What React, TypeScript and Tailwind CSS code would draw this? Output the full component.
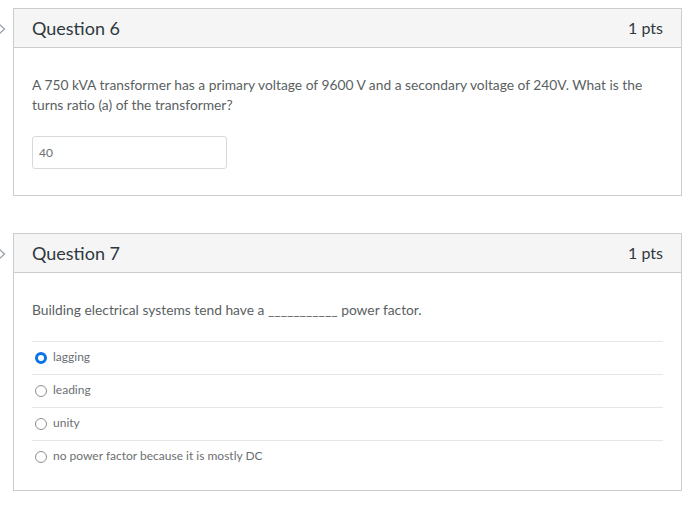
import React from "react";

function Chevron() {
  return (
    <svg className="absolute left-[-13px] top-[14px]" width="7" height="14" viewBox="0 0 7 14">
      <path d="M-2 1 L4.5 7 L-2 13" fill="none" stroke="#9aa5ae" strokeWidth="1.4" />
    </svg>
  );
}

function Header({ title }: { title: string }) {
  return (
    <div className="relative h-[39px] bg-[#f5f5f5] border-b border-[#c7cdd1] flex items-center justify-between px-[18px]">
      <span className="text-[18px] text-[#30383e]">{title}</span>
      <span className="text-[16px] text-[#30383e]">1 pts</span>
    </div>
  );
}

function Radio({ checked }: { checked?: boolean }) {
  return checked ? (
    <span className="w-[12px] h-[12px] rounded-full border-[3.5px] border-[#0b74e5] bg-white shrink-0" />
  ) : (
    <span className="w-[12px] h-[12px] rounded-full border-[1.5px] border-[#8b8f93] bg-white shrink-0" />
  );
}

export default function App() {
  const answers = ["lagging", "leading", "unity", "no power factor because it is mostly DC"];
  return (
    <div className="w-[700px] h-[510px] bg-white relative overflow-hidden" style={{ fontFamily: "Lato, 'Open Sans', sans-serif" }}>
      <div className="pt-[8px] pl-[13px] w-[682px]">
        <div className="relative">
          <Chevron />
          <div className="border border-[#c7cdd1]">
            <Header title="Question 6" />
            <div className="px-[18px] pt-[27px] pb-[26px]">
              <p className="text-[13.8px] leading-[20px] text-[#5a5f63]">
                A 750 kVA transformer has a primary voltage of 9600 V and a secondary voltage of 240V. What is the turns ratio (a) of the transformer?
              </p>
              <div className="mt-[21px] w-[195px] h-[33px] border border-[#d7dadd] rounded-[3px] flex items-center px-[6px] text-[12px] text-[#6b6f73]">
                40
              </div>
            </div>
          </div>
        </div>

        <div className="relative mt-[37px]">
          <Chevron />
          <div className="border border-[#c7cdd1]">
            <Header title="Question 7" />
            <div className="px-[18px] pt-[27px] pb-[17px]">
              <p className="text-[13.8px] leading-[20px] text-[#5a5f63]">
                Building electrical systems tend have a ___________ power factor.
              </p>
              <div className="mt-[21px]">
                {answers.map((a, i) => (
                  <div key={a} className="h-[33px] border-t border-[#e4e6e8] flex items-center gap-[6px] pl-[3px]">
                    <Radio checked={i === 0} />
                    <span className="text-[12px] leading-[14px] pb-[2px] text-[#6b6f73]">{a}</span>
                  </div>
                ))}
              </div>
            </div>
          </div>
        </div>
      </div>
    </div>
  );
}
